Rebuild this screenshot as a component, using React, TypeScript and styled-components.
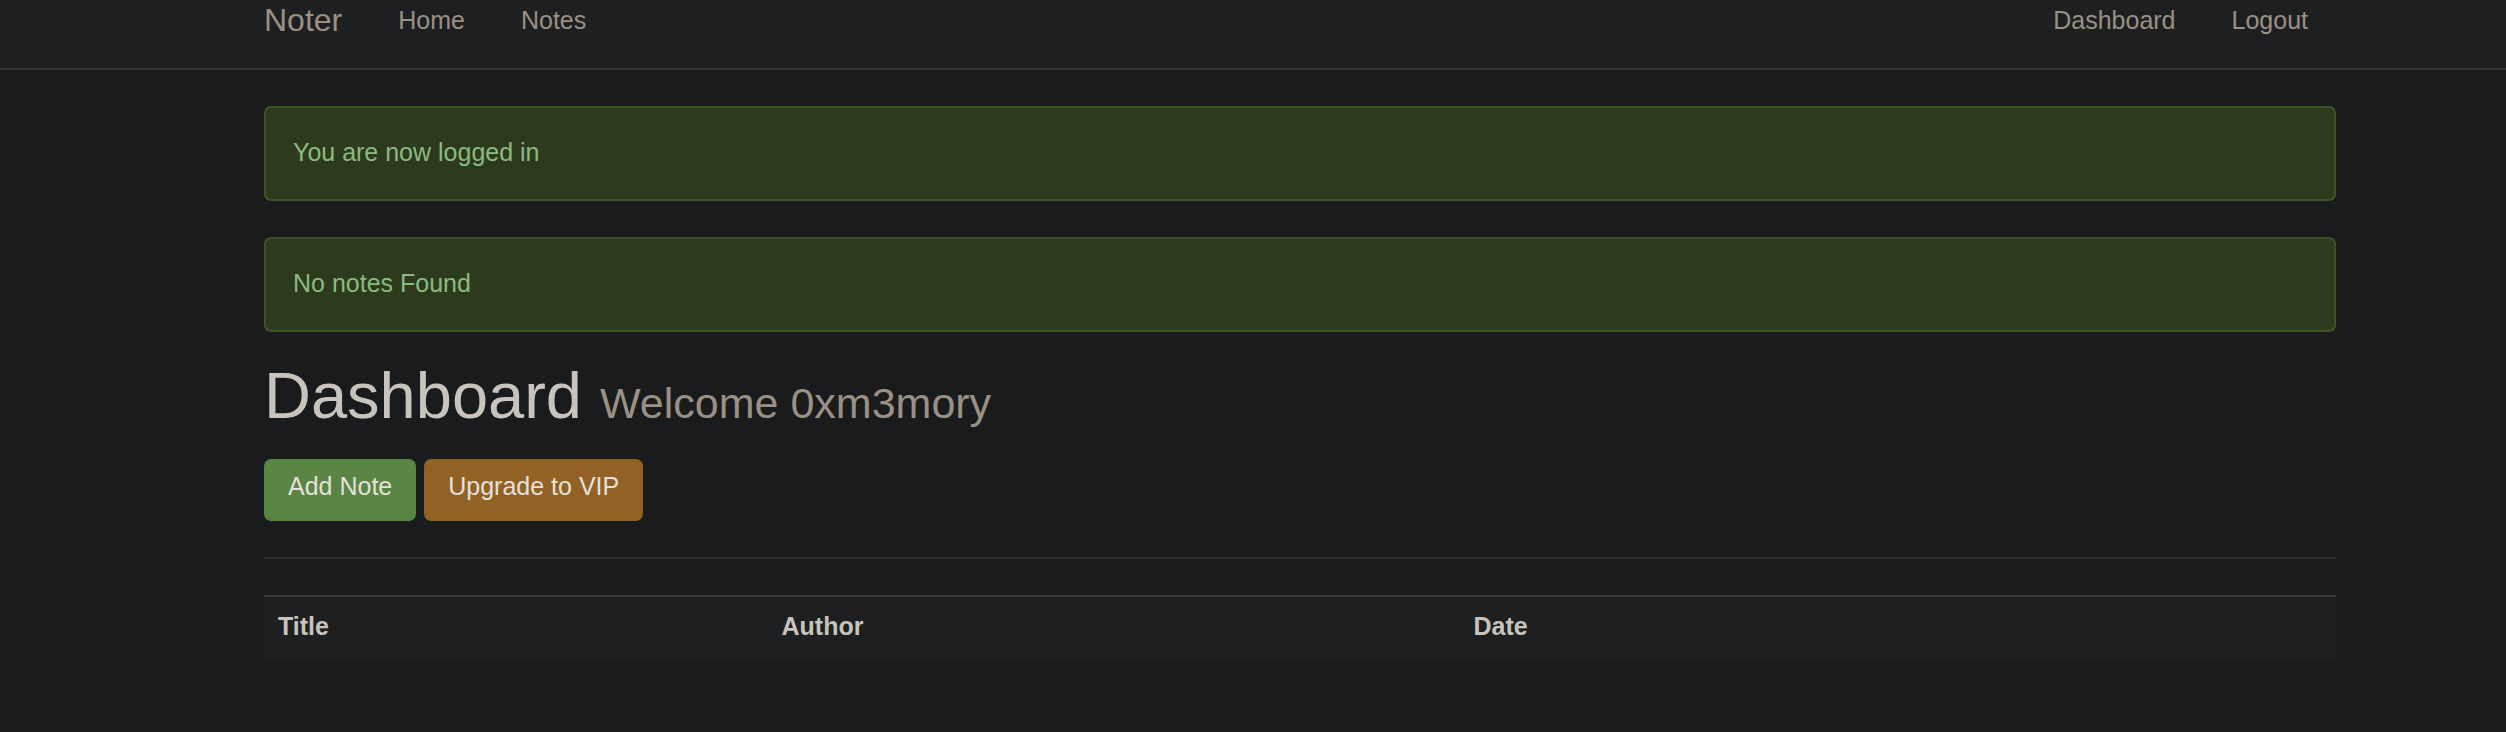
import React from "react";
import styled, { createGlobalStyle } from "styled-components";

const GlobalStyle = createGlobalStyle`
  *, *::before, *::after { box-sizing: border-box; }
  body {
    margin: 0;
    background: #1a1b1d;
    color: #c8c3bc;
    font-family: "Liberation Sans", Arial, sans-serif;
    font-size: 25px;
    line-height: 36px;
  }
`;

const Navbar = styled.nav`
  display: flex;
  justify-content: space-between;
  height: 70px;
  padding: 2px 170px 0 264px;
  background: #1e1f21;
  border-bottom: 2px solid #313335;
`;

const NavGroup = styled.div`
  display: flex;
`;

const NavLink = styled.a`
  padding: 0 28px;
  color: #9a9083;
  text-decoration: none;
`;

const Brand = styled(NavLink)`
  padding-left: 0;
  font-size: 32px;
`;

const Page = styled.main`
  padding: 36px 170px 0 264px;
`;

const Alerts = styled.div`
  display: flex;
  flex-direction: column;
  gap: 36px;
  margin-bottom: 28px;
`;

const Alert = styled.p`
  margin: 0;
  padding: 26px 27px 29px;
  border: 2px solid #3b5525;
  border-radius: 7px;
  background: #2e3a1d;
  color: #8abb80;
`;

const Title = styled.h1`
  margin: 0 0 20px;
  font-size: 65px;
  font-weight: 400;
  line-height: 72px;
`;

const Welcome = styled.small`
  font-size: 43px;
  color: #9a9083;
`;

const Actions = styled.div`
  display: flex;
  gap: 8px;
`;

const Button = styled.button<{ $tone: "success" | "warning" }>`
  padding: 7px 22px 15px;
  border: 2px solid ${(p) => (p.$tone === "success" ? "#56863f" : "#8f601f")};
  border-radius: 7px;
  background: ${(p) => (p.$tone === "success" ? "#5a8545" : "#926225")};
  color: #e4e1dc;
  font: inherit;
`;

const Divider = styled.hr`
  margin: 36px 0;
  border: 0;
  border-top: 2px solid #2f3133;
`;

const Table = styled.table`
  width: 100%;
  border-collapse: separate;
  border-spacing: 0;
  table-layout: fixed;
`;

const HeadCell = styled.th<{ $width?: string }>`
  width: ${(p) => p.$width ?? "auto"};
  padding: 11px 14px 18px;
  border-top: 2px solid #343638;
  background: #1d1f20;
  text-align: left;
`;

export default function App() {
  return (
    <>
      <GlobalStyle />
      <Navbar>
        <NavGroup>
          <Brand href="#">Noter</Brand>
          <NavLink href="#home">Home</NavLink>
          <NavLink href="#notes">Notes</NavLink>
        </NavGroup>
        <NavGroup>
          <NavLink href="#dashboard">Dashboard</NavLink>
          <NavLink href="#logout">Logout</NavLink>
        </NavGroup>
      </Navbar>
      <Page>
        <Alerts>
          <Alert role="status">You are now logged in</Alert>
          <Alert role="status">No notes Found</Alert>
        </Alerts>
        <Title>
          Dashboard <Welcome>Welcome 0xm3mory</Welcome>
        </Title>
        <Actions>
          <Button type="button" $tone="success">Add Note</Button>
          <Button type="button" $tone="warning">Upgrade to VIP</Button>
        </Actions>
        <Divider />
        <Table>
          <thead>
            <tr>
              <HeadCell $width="24.3%">Title</HeadCell>
              <HeadCell $width="33.4%">Author</HeadCell>
              <HeadCell>Date</HeadCell>
            </tr>
          </thead>
        </Table>
      </Page>
    </>
  );
}
